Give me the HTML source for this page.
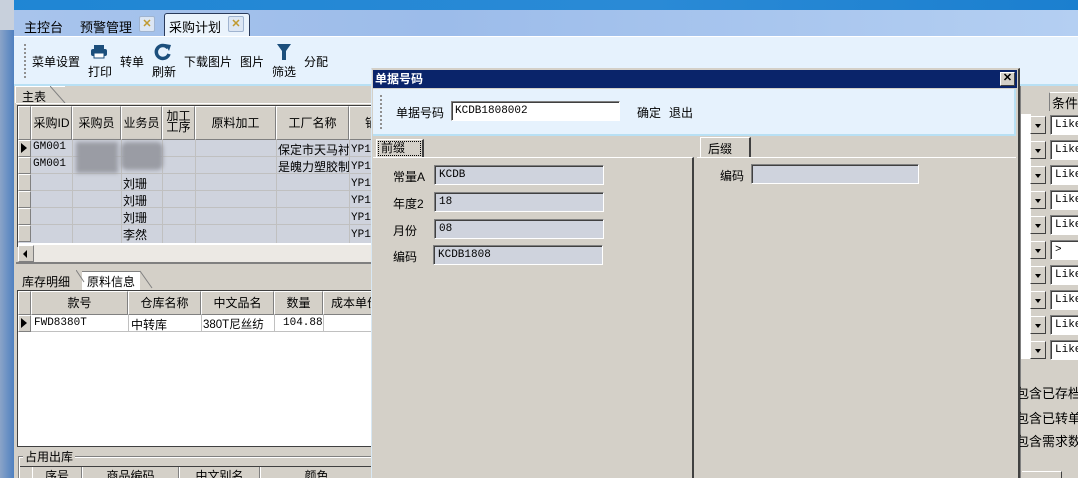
<!DOCTYPE html>
<html><head><meta charset="utf-8"><style>
*{margin:0;padding:0;box-sizing:border-box}
html,body{width:1078px;height:478px;overflow:hidden}
body{position:relative;background:#d4d0c8;font-family:"Liberation Sans","Noto Sans CJK SC",sans-serif;font-size:12px;color:#000}
.a{position:absolute}
.cell{position:absolute;border-right:1px solid #808080;border-bottom:1px solid #808080;background:#d4d0c8;border-left:1px solid #fff;border-top:1px solid #fff;text-align:center;line-height:32px;white-space:nowrap;overflow:hidden}
.ind{position:absolute;background:#d4d0c8;border:1px solid;border-color:#fff #808080 #808080 #fff}
.inp{position:absolute;background:#cfd3dd;border:1px solid;border-color:#808080 #fff #fff #808080;box-shadow:inset 1px 1px 0 #404040;height:20px;line-height:18px;padding-left:4px;font-family:"Liberation Mono",monospace;font-size:11px}
.dd{position:absolute;left:1030px;width:16px;height:18px;background:#d4d0c8;border:1px solid;border-color:#fff #404040 #404040 #fff}
.dd:after{content:"";position:absolute;left:4px;top:7px;border-left:3px solid transparent;border-right:3px solid transparent;border-top:4px solid #000}
.lk{position:absolute;left:1050px;width:40px;height:20px;background:#fff;border:1px solid;border-color:#808080 #fff #fff #808080;box-shadow:inset 1px 1px 0 #404040;font-family:"Liberation Mono",monospace;font-size:11px;line-height:18px;padding-left:4px}
.cx{position:absolute;width:16px;height:16px;background:#dce6f4;border:1px solid #a0b4d0;border-radius:2px;color:#c09a30;font-size:11px;text-align:center;line-height:14px;font-weight:bold}
</style></head><body>
<div class="a" style="left:0;top:0;width:1078px;height:10px;background:linear-gradient(90deg,#1f86d4,#2a8ad6 60%,#1b7fcf)"></div>
<div class="a" style="left:0;top:0;width:14px;height:478px;background:linear-gradient(90deg,#8aa4c8,#4f80c0)"></div>
<div class="a" style="left:0;top:0;width:14px;height:30px;background:#c8d0dc"></div>
<div class="a" style="left:14px;top:10px;width:1064px;height:26px;background:linear-gradient(90deg,#a8c4ec,#9cbcea 40%,#b4cff2)"></div>
<div class="a" style="left:24px;top:17px;font-size:13px">主控台</div>
<div class="a" style="left:80px;top:17px;font-size:13px">预警管理</div>
<div class="cx" style="left:139px;top:16px">✕</div>
<div class="a" style="left:164px;top:13px;width:86px;height:23px;background:#eaf3fc;border:1px solid #2a3a5a;border-bottom:none;border-radius:3px 3px 0 0"></div>
<div class="a" style="left:169px;top:17px;font-size:13px">采购计划</div>
<div class="cx" style="left:228px;top:16px">✕</div>
<div class="a" style="left:14px;top:36px;width:1064px;height:50px;background:#e6f2fd;border-top:1px solid #fff;border-bottom:2px solid #b8e0f4"></div>
<div class="a" style="left:24px;top:44px;height:34px;border-left:2px dotted #909090"></div>
<div class="a" style="left:32px;top:53px;font-size:12px">菜单设置</div>
<svg class="a" style="left:91px;top:45px" width="16" height="14"><rect x="3" y="0" width="10" height="4" fill="#1c4f7c"/><rect x="0" y="4" width="16" height="7" rx="2" fill="#1c4f7c"/><rect x="3" y="8" width="10" height="5" fill="#fff" stroke="#1c4f7c"/></svg>
<div class="a" style="left:88px;top:63px">打印</div>
<div class="a" style="left:120px;top:53px">转单</div>
<svg class="a" style="left:154px;top:43px" width="18" height="18"><path d="M14 5A6.5 6.5 0 1 0 15 11" stroke="#1c4f7c" stroke-width="3.5" fill="none"/><path d="M11 1L17 2L15 8Z" fill="#1c4f7c"/></svg>
<div class="a" style="left:152px;top:63px">刷新</div>
<div class="a" style="left:184px;top:53px">下载图片</div>
<div class="a" style="left:240px;top:53px">图片</div>
<svg class="a" style="left:277px;top:44px" width="14" height="16"><path d="M0 0H14L9 7V16H5V7Z" fill="#1c4f7c"/></svg>
<div class="a" style="left:272px;top:63px">筛选</div>
<div class="a" style="left:304px;top:53px">分配</div>
<div class="a" style="left:14px;top:88px;width:358px;height:390px;background:#d4d0c8"></div>
<div class="a" style="left:15px;top:86px;width:50px;height:17px;background:#d4d0c8;border-top:1px solid #fff;border-left:1px solid #fff"></div>
<div class="a" style="left:22px;top:88px;font-size:12px">主表</div>
<svg class="a" style="left:50px;top:86px" width="16" height="18"><path d="M0 0L15 17" stroke="#808080"/></svg>
<div class="a" style="left:16px;top:103px;width:356px;height:1px;background:#fff"></div>
<div class="a" style="left:17px;top:105px;width:356px;height:142px;background:#fff;border:1px solid #404040"></div>
<div class="cell" style="left:18px;top:106px;width:13px;height:34px"></div>
<div class="cell" style="left:31px;top:106px;width:41px;height:34px">采购ID</div>
<div class="cell" style="left:72px;top:106px;width:49px;height:34px">采购员</div>
<div class="cell" style="left:121px;top:106px;width:41px;height:34px">业务员</div>
<div class="cell" style="left:162px;top:106px;width:33px;height:34px;line-height:11px;padding-top:4px">加工<br>工序</div>
<div class="cell" style="left:195px;top:106px;width:81px;height:34px">原料加工</div>
<div class="cell" style="left:276px;top:106px;width:73px;height:34px">工厂名称</div>
<div class="cell" style="left:349px;top:106px;width:23px;height:34px;text-align:left;padding-left:15px">销</div>
<div class="a" style="left:18px;top:140px;width:354px;height:103px;background:#cfd3dd"></div>
<div class="a" style="left:72px;top:140px;width:1px;height:103px;background:#c0c0c0"></div>
<div class="a" style="left:121px;top:140px;width:1px;height:103px;background:#c0c0c0"></div>
<div class="a" style="left:162px;top:140px;width:1px;height:103px;background:#c0c0c0"></div>
<div class="a" style="left:195px;top:140px;width:1px;height:103px;background:#c0c0c0"></div>
<div class="a" style="left:276px;top:140px;width:1px;height:103px;background:#c0c0c0"></div>
<div class="a" style="left:349px;top:140px;width:1px;height:103px;background:#c0c0c0"></div>
<div class="a" style="left:18px;top:156px;width:354px;height:1px;background:#c0c0c0"></div>
<div class="a" style="left:18px;top:173px;width:354px;height:1px;background:#c0c0c0"></div>
<div class="a" style="left:18px;top:190px;width:354px;height:1px;background:#c0c0c0"></div>
<div class="a" style="left:18px;top:207px;width:354px;height:1px;background:#c0c0c0"></div>
<div class="a" style="left:18px;top:224px;width:354px;height:1px;background:#c0c0c0"></div>
<div class="ind" style="left:18px;top:140px;width:13px;height:17px"></div>
<div class="ind" style="left:18px;top:157px;width:13px;height:17px"></div>
<div class="ind" style="left:18px;top:174px;width:13px;height:17px"></div>
<div class="ind" style="left:18px;top:191px;width:13px;height:17px"></div>
<div class="ind" style="left:18px;top:208px;width:13px;height:17px"></div>
<div class="ind" style="left:18px;top:225px;width:13px;height:17px"></div>
<div class="a" style="left:21px;top:143px;border-top:5px solid transparent;border-bottom:5px solid transparent;border-left:6px solid #000"></div>
<div class="a" style="left:33px;top:141px;font-family:'Liberation Mono',monospace;font-size:11px">GM001</div>
<div class="a" style="left:33px;top:158px;font-family:'Liberation Mono',monospace;font-size:11px">GM001</div>
<div class="a" style="left:76px;top:142px;width:42px;height:31px;background:#9a9ca4;filter:blur(2px)"></div>
<div class="a" style="left:121px;top:142px;width:42px;height:28px;background:#9a9ca4;filter:blur(2px);border-radius:6px"></div>
<div class="a" style="left:123px;top:175px">刘珊</div>
<div class="a" style="left:123px;top:192px">刘珊</div>
<div class="a" style="left:123px;top:209px">刘珊</div>
<div class="a" style="left:123px;top:226px">李然</div>
<div class="a" style="left:278px;top:141px;width:71px;overflow:hidden;white-space:nowrap">保定市天马衬</div>
<div class="a" style="left:278px;top:158px;width:71px;overflow:hidden;white-space:nowrap">是魄力塑胶制</div>
<div class="a" style="left:351px;top:142px;font-family:'Liberation Mono',monospace;font-size:11px;line-height:17px;width:20px;overflow:hidden">YP18<br>YP18<br>YP18<br>YP18<br>YP18<br>YP18</div>
<div class="a" style="left:18px;top:245px;width:354px;height:17px;background:#ece9e4"></div>
<div class="ind" style="left:18px;top:245px;width:16px;height:17px"></div>
<div class="a" style="left:23px;top:250px;border-top:4px solid transparent;border-bottom:4px solid transparent;border-right:4px solid #000"></div>
<div class="a" style="left:16px;top:262px;width:356px;height:2px;background:#808080"></div>
<div class="a" style="left:22px;top:273px">库存明细</div>
<div class="a" style="left:82px;top:271px;width:58px;height:19px;background:#fff;border-top:1px solid #808080"></div>
<svg class="a" style="left:76px;top:270px" width="80" height="20"><path d="M0 0L8 12M64 1L76 18" stroke="#808080" fill="none"/></svg>
<div class="a" style="left:87px;top:273px">原料信息</div>
<div class="a" style="left:17px;top:290px;width:356px;height:157px;background:#fff;border:1px solid #404040"></div>
<div class="cell" style="left:18px;top:291px;width:13px;height:24px;line-height:22px"></div>
<div class="cell" style="left:31px;top:291px;width:97px;height:24px;line-height:22px">款号</div>
<div class="cell" style="left:128px;top:291px;width:73px;height:24px;line-height:22px">仓库名称</div>
<div class="cell" style="left:201px;top:291px;width:73px;height:24px;line-height:22px">中文品名</div>
<div class="cell" style="left:274px;top:291px;width:49px;height:24px;line-height:22px">数量</div>
<div class="cell" style="left:323px;top:291px;width:49px;height:24px;line-height:22px;text-align:left;padding-left:7px">成本单价</div>
<div class="ind" style="left:18px;top:315px;width:13px;height:17px"></div>
<div class="a" style="left:21px;top:318px;border-top:5px solid transparent;border-bottom:5px solid transparent;border-left:6px solid #000"></div>
<div class="a" style="left:31px;top:315px;width:341px;height:17px;border-bottom:1px solid #c0c0c0"></div>
<div class="a" style="left:128px;top:315px;width:1px;height:17px;background:#c0c0c0"></div>
<div class="a" style="left:201px;top:315px;width:1px;height:17px;background:#c0c0c0"></div>
<div class="a" style="left:274px;top:315px;width:1px;height:17px;background:#c0c0c0"></div>
<div class="a" style="left:323px;top:315px;width:1px;height:17px;background:#c0c0c0"></div>
<div class="a" style="left:34px;top:317px;font-family:'Liberation Mono',monospace;font-size:11px">FWD8380T</div>
<div class="a" style="left:131px;top:316px">中转库</div>
<div class="a" style="left:203px;top:316px;font-size:11.5px">380T尼丝纺</div>
<div class="a" style="left:283px;top:317px;font-family:'Liberation Mono',monospace;font-size:11px">104.88</div>
<div class="a" style="left:18px;top:456px;width:354px;height:22px;border-top:1px solid #808080;border-left:1px solid #808080;box-shadow:inset 1px 1px 0 #fff"></div>
<div class="a" style="left:23px;top:448px;background:#d4d0c8;padding:0 2px">占用出库</div>
<div class="a" style="left:20px;top:466px;width:352px;height:12px;border-top:1px solid #404040;background:#d4d0c8"></div>
<div class="a" style="left:32px;top:467px;width:50px;height:11px;border-left:1px solid #fff;border-right:1px solid #808080;text-align:center;line-height:18px;overflow:hidden">序号</div>
<div class="a" style="left:82px;top:467px;width:97px;height:11px;border-left:1px solid #fff;border-right:1px solid #808080;text-align:center;line-height:18px;overflow:hidden">商品编码</div>
<div class="a" style="left:179px;top:467px;width:81px;height:11px;border-left:1px solid #fff;border-right:1px solid #808080;text-align:center;line-height:18px;overflow:hidden">中文别名</div>
<div class="a" style="left:260px;top:467px;width:112px;height:11px;border-left:1px solid #fff;text-align:center;line-height:18px;overflow:hidden">颜色</div>
<div class="a" style="left:1019px;top:86px;width:2px;height:392px;background:#808080"></div>
<div class="a" style="left:1049px;top:92px;width:30px;height:19px;border-left:1px solid #808080;border-top:1px solid #fff;padding-left:2px;font-size:13px">条件</div>
<div class="a" style="left:1021px;top:114px;width:10px;height:245px;background:#fff"></div>
<div class="dd" style="top:116px"></div><div class="lk" style="top:115px">Like</div>
<div class="dd" style="top:141px"></div><div class="lk" style="top:140px">Like</div>
<div class="dd" style="top:166px"></div><div class="lk" style="top:165px">Like</div>
<div class="dd" style="top:191px"></div><div class="lk" style="top:190px">Like</div>
<div class="dd" style="top:216px"></div><div class="lk" style="top:215px">Like</div>
<div class="dd" style="top:241px"></div><div class="lk" style="top:240px">&gt;</div>
<div class="dd" style="top:266px"></div><div class="lk" style="top:265px">Like</div>
<div class="dd" style="top:291px"></div><div class="lk" style="top:290px">Like</div>
<div class="dd" style="top:316px"></div><div class="lk" style="top:315px">Like</div>
<div class="dd" style="top:341px"></div><div class="lk" style="top:340px">Like</div>
<div class="a" style="left:1016px;top:383px;width:62px;overflow:hidden;white-space:nowrap;font-size:13px">包含已存档</div>
<div class="a" style="left:1016px;top:408px;width:62px;overflow:hidden;white-space:nowrap;font-size:13px">包含已转单</div>
<div class="a" style="left:1016px;top:431px;width:62px;overflow:hidden;white-space:nowrap;font-size:13px">包含需求数量</div>
<div class="a" style="left:1022px;top:471px;width:40px;height:7px;border-top:1px solid #fff;border-right:1px solid #404040"></div>
<div class="a" style="left:371px;top:68px;width:649px;height:410px;background:#d4d0c8;border-left:1px solid #d8e8f4;border-top:1px solid #d4d0c8;border-right:2px solid #404040"></div>
<div class="a" style="left:373px;top:70px;width:644px;height:18px;background:#0a246a;color:#fff;font-weight:bold;font-size:12px;line-height:18px;padding-left:2px">单据号码</div>
<div class="a" style="left:1000px;top:72px;width:15px;height:14px;background:#d4d0c8;border:1px solid;border-color:#fff #404040 #404040 #fff;font-size:11px;text-align:center;line-height:11px;font-weight:bold">✕</div>
<div class="a" style="left:373px;top:89px;width:643px;height:47px;background:#e6f2fd;border-right:2px solid #b8e0f4;border-bottom:2px solid #b8e0f4"></div>
<div class="a" style="left:380px;top:95px;height:34px;border-left:2px dotted #909090"></div>
<div class="a" style="left:396px;top:104px;font-size:12px">单据号码</div>
<div class="a" style="left:451px;top:101px;width:169px;height:20px;background:#fff;border:1px solid;border-color:#808080 #fff #fff #808080;box-shadow:inset 1px 1px 0 #404040;font-family:'Liberation Mono',monospace;font-size:11px;line-height:18px;padding-left:3px">KCDB1808002</div>
<div class="a" style="left:637px;top:104px">确定</div>
<div class="a" style="left:669px;top:104px">退出</div>
<div class="a" style="left:376px;top:139px;width:48px;height:19px;border-top:1px solid #fff;border-left:1px solid #fff;border-right:2px solid #404040"></div>
<div class="a" style="left:378px;top:141px;width:43px;height:15px;border:1px dotted #000;line-height:13px;padding-left:2px">前缀</div>
<div class="a" style="left:373px;top:157px;width:321px;height:321px;border-top:1px solid #fff;border-right:2px solid #404040"></div>
<div class="a" style="left:393px;top:168px">常量A</div>
<div class="inp" style="left:434px;top:165px;width:170px">KCDB</div>
<div class="a" style="left:393px;top:195px">年度2</div>
<div class="inp" style="left:434px;top:192px;width:170px">18</div>
<div class="a" style="left:393px;top:222px">月份</div>
<div class="inp" style="left:434px;top:219px;width:170px">08</div>
<div class="a" style="left:393px;top:248px">编码</div>
<div class="inp" style="left:433px;top:245px;width:170px">KCDB1808</div>
<div class="a" style="left:700px;top:137px;width:51px;height:21px;border-top:1px solid #fff;border-left:1px solid #fff;border-right:2px solid #404040;padding:2px 0 0 7px">后缀</div>
<div class="a" style="left:697px;top:157px;width:319px;height:1px;background:#fff"></div>
<div class="a" style="left:720px;top:167px">编码</div>
<div class="inp" style="left:751px;top:164px;width:168px"></div>
</body></html>
